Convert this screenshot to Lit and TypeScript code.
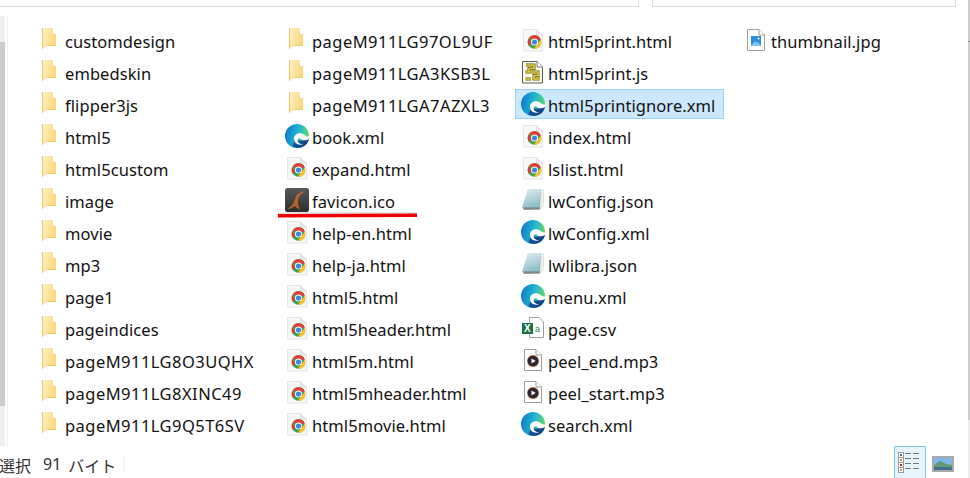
import { LitElement, html, css, svg } from "lit";
import { customElement } from "lit/decorators.js";

type Kind = "folder" | "edge" | "chrome" | "ico" | "js" | "json" | "csv" | "mp3" | "jpg";
interface Item { n: string; k: Kind; sel?: boolean }

const col = (k: Kind, names: string[]): Item[] => names.map((n) => ({ n, k }));

const columns: { w: number; items: Item[] }[] = [
  { w: 247, items: col("folder", ["customdesign","embedskin","flipper3js","html5","html5custom","image","movie","mp3","page1","pageindices","pageM911LG8O3UQHX","pageM911LG8XINC49","pageM911LG9Q5T6SV"]) },
  { w: 236, items: [
    ...col("folder", ["pageM911LG97OL9UF","pageM911LGA3KSB3L","pageM911LGA7AZXL3"]),
    { n: "book.xml", k: "edge" }, { n: "expand.html", k: "chrome" }, { n: "favicon.ico", k: "ico" },
    ...col("chrome", ["help-en.html","help-ja.html","html5.html","html5header.html","html5m.html","html5mheader.html","html5movie.html"]),
  ] },
  { w: 223, items: [
    { n: "html5print.html", k: "chrome" }, { n: "html5print.js", k: "js" },
    { n: "html5printignore.xml", k: "edge", sel: true },
    { n: "index.html", k: "chrome" }, { n: "lslist.html", k: "chrome" },
    { n: "lwConfig.json", k: "json" }, { n: "lwConfig.xml", k: "edge" }, { n: "lwlibra.json", k: "json" },
    { n: "menu.xml", k: "edge" }, { n: "page.csv", k: "csv" }, { n: "peel_end.mp3", k: "mp3" },
    { n: "peel_start.mp3", k: "mp3" }, { n: "search.xml", k: "edge" },
  ] },
  { w: 200, items: [{ n: "thumbnail.jpg", k: "jpg" }] },
];

const page = svg`<path d="M2.500 1.500h13l6 6v15.500h-19z" fill="#f7f7f7" stroke="#e6e6e6"/><path d="M15.500 1.500v6h6" fill="#e6e6e6" stroke="#e0e0e0"/>`;
const greyPage = svg`<path d="M3.500 1.500h11.500l5.500 5.500v15.500H3.500z" fill="#fff" stroke="#a0a0a0"/><path d="M15 1.500v5.500h5.500" fill="#fff" stroke="#a0a0a0"/>`;

const icons: Record<Kind, unknown> = {
  folder: svg`
    <defs><linearGradient id="f1" x1="0" y1="0" x2="1" y2="0.300"><stop offset="0" stop-color="#fff2c6"/><stop offset="1" stop-color="#fbd97f"/></linearGradient></defs>
    <path d="M0 0h11v6h3v12H5L0 21z" fill="url(#f1)"/>
    <path d="M0 0h1v20.500L0 21z" fill="#eccb74"/>
    <path d="M5 18h9v-1H6z" fill="#eec96c"/>`,
  edge: svg`
    <defs>
      <linearGradient id="e1" x1="0" y1="0.300" x2="1" y2="0.500"><stop offset="0" stop-color="#0d7bd0"/><stop offset="0.550" stop-color="#22b6d2"/><stop offset="1" stop-color="#63dd66"/></linearGradient>
      <linearGradient id="e2" x1="0" y1="0" x2="1" y2="0.500"><stop offset="0" stop-color="#0e5fb0"/><stop offset="1" stop-color="#123f80"/></linearGradient>
    </defs>
    <circle cx="12" cy="12" r="12" fill="url(#e1)"/>
    <path d="M7 22c3 2.500 9 2.500 13-.5 2-1.500 3.500-4 4-6.500l-5 1c-3 1-7 1-9-1-1 3-2 6-3 7.500z" fill="url(#e2)"/>
    <path d="M9 15.500C8.500 11.500 12 8.800 15.500 9.200 19 9.600 20.500 12.500 24 12.600V14.800C21 16.800 17.500 16.800 16 15 15 13.600 13 14 12.700 16 12.500 18.500 15 20.300 18.500 20.200L15 20.800C11.500 20.500 9.300 18.500 9 15.500z" fill="#fff"/>`,
  chrome: svg`${page}
    <circle cx="13.500" cy="14" r="6.800" fill="#43a047"/>
    <path d="M7.600 10.600A6.800 6.800 0 0 1 19.900 11.700H13.500z" fill="#e53a2f"/>
    <path d="M7.600 10.600 10.500 15.700 7.600 17.400A6.800 6.800 0 0 1 7.600 10.600z" fill="#d9403a"/>
    <path d="M19.900 11.700A6.800 6.800 0 0 1 13 20.800L16.500 15.700z" fill="#fbc02d"/>
    <circle cx="13.500" cy="14" r="3.500" fill="#fff"/><circle cx="13.500" cy="14" r="2.600" fill="#3f86e0"/>`,
  ico: svg`
    <defs><linearGradient id="i1" x1="0" y1="0" x2="0" y2="1"><stop offset="0" stop-color="#585858"/><stop offset="1" stop-color="#2e2e2e"/></linearGradient></defs>
    <rect width="24" height="24" rx="2.500" fill="url(#i1)"/>
    <path d="M20 3.500C15 3.500 11 6 9.500 12 9 15 7 18 2 21 6 21 8 19.500 10 18 11 19.500 13 20.500 15 21 13 18 12.500 15 13 12 13.500 8 16 6 20 3.500z" fill="#b5622c"/>`,
  js: svg`
    <path d="M1.500 1.500h14.500l5.500 5.500v16h-20z" fill="#fffdea" stroke="#5a5a5a"/><path d="M16 1.500v5.500h5.500" fill="#fff" stroke="#777"/>
    <path d="M5 5h8v3.500H8v3.500h9v3.500h-4v3.500h6M4.500 12H8M4.500 19H10" fill="none" stroke="#5f5a20" stroke-width="3"/>
    <path d="M5 5h8v3.500H8v3.500h9v3.500h-4v3.500h6M4.500 12H8M4.500 19H10" fill="none" stroke="#e8d23a" stroke-width="1.600"/>`,
  json: svg`
    <defs><linearGradient id="j1" x1="0" y1="0" x2="0.300" y2="1"><stop offset="0" stop-color="#e3f0f3"/><stop offset="1" stop-color="#8fc0cb"/></linearGradient></defs>
    <path d="M7 1h16l-1 20-19 1z" fill="#9aa3a5"/>
    <path d="M7 1h13l-2 18.500H1z" fill="url(#j1)"/>
    <path d="M20 1h3l-1 20h-3z" fill="#eeeeee"/>
    <path d="M1 19.500h17l1 2H3z" fill="#7d8688"/>`,
  csv: svg`
    <path d="M8.500 1.500h9.500l4.500 4.500v15.500h-14z" fill="#fff" stroke="#a0a0a0"/>
    <rect x="1" y="7" width="11" height="11" fill="#1d7044"/>
    <text x="3" y="16" font-size="10" font-weight="700" fill="#fff" font-family="Liberation Sans">X</text>
    <text x="14" y="16" font-size="9" fill="#2f8a58" font-family="Liberation Sans">a</text>`,
  mp3: svg`${greyPage}
    <circle cx="12" cy="13" r="6" fill="#b5703f"/>
    <circle cx="12" cy="13" r="5.300" fill="#2a2630"/>
    <path d="M10.500 10.500v5l4.200-2.500z" fill="#fff"/>`,
  jpg: svg`${greyPage}
    <rect x="7" y="8" width="10" height="10" fill="#2b8fe0"/>
    <path d="M7 18l4-5 2 2 1-1 3 4z" fill="#7cc8f5"/><circle cx="14.500" cy="10.500" r="1" fill="#fff"/>`,
};

@customElement("app-root")
export class AppRoot extends LitElement {
  static styles = css`
    :host { display: flex; width: 970px; height: 478px; background: #fff; overflow: hidden; position: relative;
      font-family: "Noto Sans", "Noto Sans CJK JP", sans-serif; color: #111; }
    .page { flex: 1; min-width: 0; display: flex; flex-direction: column; }
    .rail { width: 2px; flex: none; display: flex; flex-direction: column; background: #ececec; }
    .rail-a { height: 41px; background: #cdcdcd; }
    .rail-tick { height: 1px; background: #8f8f8f; }
    .rail-b { height: 378px; background: #cdcdcd; }
    .top { display: flex; height: 7px; gap: 13px; flex: none; }
    .box { height: 6px; border-bottom: 1px solid #d9d9d9; }
    .box.addr { width: 638px; border-right: 1px solid #d9d9d9; }
    .box.search { width: 302px; border-left: 1px solid #d9d9d9; border-right: 1px solid #d9d9d9; }
    .main { display: flex; height: 439px; flex: none; }
    .nav { width: 7px; flex: none; display: flex; border-right: 1px solid #f2f2f2; margin-top: 9px; }
    .scroll { width: 5px; background: #f0f0f0; display: flex; flex-direction: column; padding-top: 26px; padding-bottom: 40px; box-sizing: border-box; }
    .thumb { background: #cdcdcd; flex: 1; }
    .files { display: flex; padding: 18px 0 0 24px; }
    .col { display: flex; flex-direction: column; }
    .item { height: 32px; }
    .text { font-size: 16.500px; white-space: nowrap; padding-top: 2px; letter-spacing: 0.08px; }
    .text.caps { letter-spacing: 0.46px; }
    .inner { display: inline-flex; align-items: center; height: 30px; box-sizing: border-box; padding-right: 8px; border: 1px solid transparent; vertical-align: top; }
    .item.sel .inner { background: #cce8ff; border-color: #99d1ff; }
    .ic { width: 32px; flex: none; display: flex; align-items: center; box-sizing: border-box; padding-left: 5px; }
    .ic.folder { padding: 0 0 3px 9px; }
    .ic svg { display: block; }
    .status { flex: 1; display: flex; font-size: 16px; color: #333; }
    .sel-text { width: 124px; flex: none; display: flex; margin-left: -1px; padding-top: 7px; white-space: nowrap; }
    .sel-text .a { margin-right: 12px; }
    .sel-text .b { margin-right: 7px; }
    .sep { width: 2px; height: 17px; background: #f3f3f3; margin-top: 9px; }
    .views { margin-left: auto; display: flex; gap: 6px; margin-right: 14px; }
    .v1 { width: 32px; height: 32px; box-sizing: border-box; background: #e5f3fb; border: 1px solid #7fc4ee; border-bottom: none; display: flex; justify-content: center; padding-top: 4px; }
    .v2 { padding-top: 9px; }
    .red { position: absolute; left: 277px; top: 212px; pointer-events: none; }
  `;

  private row(i: Item) {
    const size = i.k === "folder" ? [14, 21] : [24, 24];
    const caps = /^pageM911/.test(i.n);
    return html`<div class="item ${i.sel ? "sel" : ""}">
      <div class="inner">
        <span class="ic ${i.k === "folder" ? "folder" : ""}">
          <svg width=${size[0]} height=${size[1]} viewBox="0 0 ${size[0]} ${size[1]}">${icons[i.k]}</svg>
        </span>
        <span class="text ${caps ? "caps" : ""}">${i.n}</span>
      </div>
    </div>`;
  }

  render() {
    return html`
      <div class="page">
        <div class="top"><div class="box addr"></div><div class="box search"></div></div>
        <div class="main">
          <div class="nav"><div class="scroll"><div class="thumb"></div></div></div>
          <div class="files">
            ${columns.map((c) => html`<div class="col" style="width:${c.w}px">${c.items.map((i) => this.row(i))}</div>`)}
          </div>
        </div>
        <div class="status">
          <div class="sel-text"><span class="a">選択</span><span class="b">91</span><span>バイト</span></div>
          <div class="sep"></div>
          <div class="views">
            <div class="v1">
              <svg width="26" height="26" viewBox="0 0 26 26">
                ${[0, 1, 2, 3].map((r) => svg`
                  <rect x="1.500" y="${1.500 + r * 5}" width="5" height="5" fill="#fff" stroke="#9a9a9a"/>
                  <rect x="3" y="${3 + r * 5}" width="2" height="2" fill="${["#4a6f9a", "#a89050", "#b53a2a", "#a8a060"][r]}"/>
                  <rect x="8" y="${2 + r * 5}" width="6" height="1" fill="#777"/>
                  <rect x="16" y="${2 + r * 5}" width="6" height="1" fill="#777"/>`)}
              </svg>
            </div>
            <div class="v2">
              <svg width="22" height="16" viewBox="0 0 22 16">
                <rect x="1" y="1" width="20" height="14" fill="#fff" stroke="#a8a8a8" stroke-width="2"/>
                <rect x="2" y="2" width="18" height="12" fill="#7fb8ea"/>
                <path d="M2 9 8 5l6 3 6 1v5H2z" fill="#5f9a70"/>
                <path d="M2 11h18v3H2z" fill="#3f6e90"/>
              </svg>
            </div>
          </div>
        </div>
      </div>
      <div class="rail"><div class="rail-a"></div><div class="rail-tick"></div><div class="rail-b"></div></div>
      <svg class="red" width="142" height="10" viewBox="0 0 142 10">
        <path d="M1 2.500 H140" stroke="#000" stroke-opacity=".1" stroke-width="5"/>
        <path d="M1 3.800 L140 3.200" stroke="#ee0000" stroke-width="3.500"/>
      </svg>
    `;
  }
}
